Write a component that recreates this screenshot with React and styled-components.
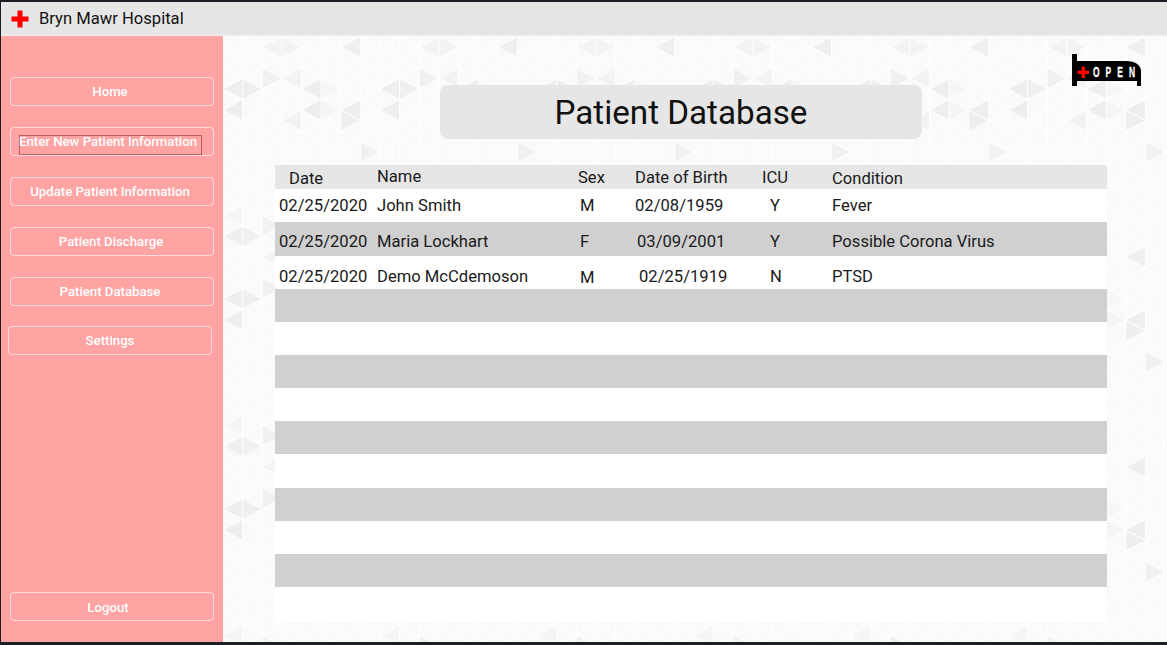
import React from "react";
import styled, { createGlobalStyle } from "styled-components";

// triangle grid of the page background, one 157x210 repeat
const COL = 157 / 8;
const ROW = 21;
const px = (col) => (col * COL).toFixed(1);
const evenY = (k) => 11 + ROW * k;
const oddY = (k) => 0.5 + ROW * k;

function gridLines() {
  let d = "";
  for (let c = 0; c <= 8; c++) {
    d += `M${px(c)} 0V210`;
  }
  for (let c = 0; c < 8; c++) {
    for (let k = -1; k < 11; k++) {
      const a = c % 2 === 0 ? evenY(k) : oddY(k);
      d += `M${px(c)} ${a}L${px(c + 1)} ${a + ROW / 2}M${px(c)} ${a}L${px(c + 1)} ${a - ROW / 2}`;
    }
  }
  return d;
}

// col, y of the vertical edge's middle, which side the edge is on, fill
const shaded = [
  [0, 53, "r", "#eeeeee"],
  [1, 53, "l", "#efefef"],
  [2, 42, "l", "#f0f0f0"],
  [3, 42, "r", "#f3f3f3"],
  [4, 53, "r", "#eeeeee"],
  [5, 53, "l", "#f6f6f6"],
  [0, 74, "r", "#eeeeee"],
  [4, 74, "r", "#eeeeee"],
  [5, 74, "l", "#f5f5f5"],
  [6, 74, "r", "#eeeeee"],
  [6, 85, "l", "#eeeeee"],
  [3, 85, "r", "#f2f2f2"],
  [6, 11, "r", "#efefef"],
  [2, 11, "r", "#f3f3f3"],
  [3, 11, "l", "#f3f3f3"],
  [7, 116, "l", "#f1f1f1"],
  [2, 190, "l", "#f1f1f1"],
  [0, 201, "r", "#efefef"],
  [1, 201, "l", "#f0f0f0"],
  [0, 180, "r", "#f5f5f5"],
];

function triangle([col, y, side, fill]) {
  const edge = side === "r" ? col + 1 : col;
  const apex = side === "r" ? col : col + 1;
  return `<path d="M${px(edge)} ${y - ROW / 2}V${y + ROW / 2}L${px(apex)} ${y}Z" fill="${fill}"/>`;
}

const tile = encodeURIComponent(
  `<svg xmlns="http://www.w3.org/2000/svg" width="157" height="210"><rect width="157" height="210" fill="#fafafa"/>${shaded
    .map(triangle)
    .join("")}<path d="${gridLines()}" fill="none" stroke="#ffffff" stroke-width="1"/></svg>`
);

const GlobalStyle = createGlobalStyle`
  html, body {
    margin: 0;
    padding: 0;
    height: 100%;
    background: #1b1e24;
    font-family: Roboto, "Liberation Sans", sans-serif;
    overflow: hidden;
  }
`;

const Frame = styled.div`
  height: 645px;
  box-sizing: border-box;
  padding: 2px 0 3px 1px;
  display: flex;
  flex-direction: column;
`;

const TopBar = styled.header`
  height: 33px;
  flex: none;
  background: #e6e6e6;
  border-bottom: 1px solid #eeeeee;
  display: flex;
  align-items: center;
  gap: 10px;
  padding-left: 10px;
  font-size: 16.6px;
  color: #111111;
`;

const Body = styled.div`
  flex: 1;
  display: flex;
  min-height: 0;
`;

const Sidebar = styled.nav`
  width: 222px;
  flex: none;
  background: #ffa3a3;
  box-sizing: border-box;
  padding: 40px 0 20px 9px;
  display: flex;
  flex-direction: column;
`;

const NavButton = styled.button`
  width: 204px;
  height: 29px;
  flex: none;
  box-sizing: border-box;
  margin: ${(p) => p.$top ?? 21}px 0 0 ${(p) => p.$left || 0}px;
  padding: ${(p) => p.$drop || 0}px ${(p) => p.$shift ?? 4}px 0 0;
  background: transparent;
  border: 1px solid rgba(255, 255, 255, 0.6);
  border-radius: 4px;
  color: #ffffff;
  font-family: inherit;
  font-size: 13.2px;
  font-weight: 500;
  text-align: center;
  white-space: nowrap;
`;

const FocusBox = styled.span`
  display: block;
  width: 183px;
  height: 20px;
  box-sizing: border-box;
  margin: 7px 0 0 8px;
  border: 1px solid #b25f68;
  line-height: 11px;
  text-align: left;
  text-indent: -1px;
`;

const Main = styled.main`
  flex: 1;
  position: relative;
  background: #fafafa url("data:image/svg+xml,${tile}");
  padding: 49px 60px 0 52px;
  display: flex;
  flex-direction: column;
`;

const OpenSign = styled.svg`
  position: absolute;
  top: 18px;
  right: 25px;
`;

const TitleCard = styled.h1`
  width: 482px;
  height: 54px;
  flex: none;
  margin: 0 0 26px 165px;
  background: #e6e6e6;
  border-radius: 8px;
  display: flex;
  align-items: center;
  justify-content: center;
  font-size: 33.2px;
  font-weight: 400;
  color: #111111;
`;

const Table = styled.div`
  width: 832px;
  background: #ffffff;
  color: #1a1a1a;
  font-size: 16.6px;
`;

const Row = styled.div`
  display: grid;
  grid-template-columns: 102px 201px 57px 127px 70px 1fr;
  align-items: center;
  box-sizing: border-box;
  height: ${(p) => p.$height || 33}px;
  padding-top: ${(p) => p.$textDrop || 0}px;
  background: ${(p) => (p.$head ? "#e6e6e6" : p.$shade ? "#d0d0d0" : "#ffffff")};
`;

const Cell = styled.div`
  padding-left: ${(p) => p.$pad || 0}px;
  padding-bottom: ${(p) => p.$lift || 0}px;
  padding-top: ${(p) => p.$drop || 0}px;
  white-space: nowrap;
`;

const patients = [
  { date: "02/25/2020", name: "John Smith", sex: "M", sexDrop: 0, dob: "02/08/1959", dobPad: 0, icu: "Y", condition: "Fever", height: 33, textDrop: 0 },
  { date: "02/25/2020", name: "Maria Lockhart", sex: "F", sexDrop: 0, dob: "03/09/2001", dobPad: 2, icu: "Y", condition: "Possible Corona Virus", height: 34, shade: true, textDrop: 4 },
  { date: "02/25/2020", name: "Demo McCdemoson", sex: "M", sexDrop: 2, dob: "02/25/1919", dobPad: 4, icu: "N", condition: "PTSD", height: 33, textDrop: 8 },
];

const emptyRows = [33, 33, 33, 33, 33, 34, 33, 33, 33, 35];

function CrossIcon() {
  return (
    <svg width="18" height="18" viewBox="0 0 18 18">
      <path d="M6.5 0.5h5v6h6v5h-6v6h-5v-6h-6v-5h6z" fill="#ff0000" />
    </svg>
  );
}

function OpenBedIcon() {
  return (
    <OpenSign width="70" height="33" viewBox="0 0 70 33">
      <path d="M0 0h5v7h49c9 0 15 4 15 10v15h-4v-5H5v5H0z" fill="#000000" />
      <path d="M5.500 16.500h4v-4h3.500v4h4v3.500h-4v4h-3.500v-4h-4z" fill="#ff0000" />
      <text
        transform="translate(21 23) scale(0.6 1)"
        fill="#ffffff"
        stroke="#ffffff"
        strokeWidth="0.3"
        fontFamily="Liberation Sans, sans-serif"
        fontSize="14"
        fontWeight="700"
        textLength="70"
        lengthAdjust="spacing"
      >
        OPEN
      </text>
    </OpenSign>
  );
}

export default function App() {
  return (
    <Frame>
      <GlobalStyle />
      <TopBar>
        <CrossIcon />
        Bryn Mawr Hospital
      </TopBar>
      <Body>
        <Sidebar>
          <NavButton $top={1}>Home</NavButton>
          <NavButton $shift={0}>
            <FocusBox>Enter New Patient Information</FocusBox>
          </NavButton>
          <NavButton>Update Patient Information</NavButton>
          <NavButton $shift={2}>Patient Discharge</NavButton>
          <NavButton>Patient Database</NavButton>
          <NavButton $top={20} $left={-2} $shift={0}>Settings</NavButton>
          <NavButton $top={237} $shift={8} $drop={2}>Logout</NavButton>
        </Sidebar>
        <Main>
          <OpenBedIcon />
          <TitleCard>Patient Database</TitleCard>
          <Table>
            <Row $head $height={24}>
              <Cell $pad={14} $drop={3}>Date</Cell>
              <Cell $lift={1}>Name</Cell>
              <Cell>Sex</Cell>
              <Cell>Date of Birth</Cell>
              <Cell>ICU</Cell>
              <Cell $drop={2}>Condition</Cell>
            </Row>
            {patients.map((p) => (
              <Row key={p.name} $shade={p.shade} $height={p.height} $textDrop={p.textDrop}>
                <Cell $pad={4}>{p.date}</Cell>
                <Cell>{p.name}</Cell>
                <Cell $pad={2} $drop={p.sexDrop}>{p.sex}</Cell>
                <Cell $pad={p.dobPad}>{p.dob}</Cell>
                <Cell $pad={8}>{p.icu}</Cell>
                <Cell>{p.condition}</Cell>
              </Row>
            ))}
            {emptyRows.map((h, i) => (
              <Row key={i} $shade={i % 2 === 0} $height={h} />
            ))}
          </Table>
        </Main>
      </Body>
    </Frame>
  );
}
